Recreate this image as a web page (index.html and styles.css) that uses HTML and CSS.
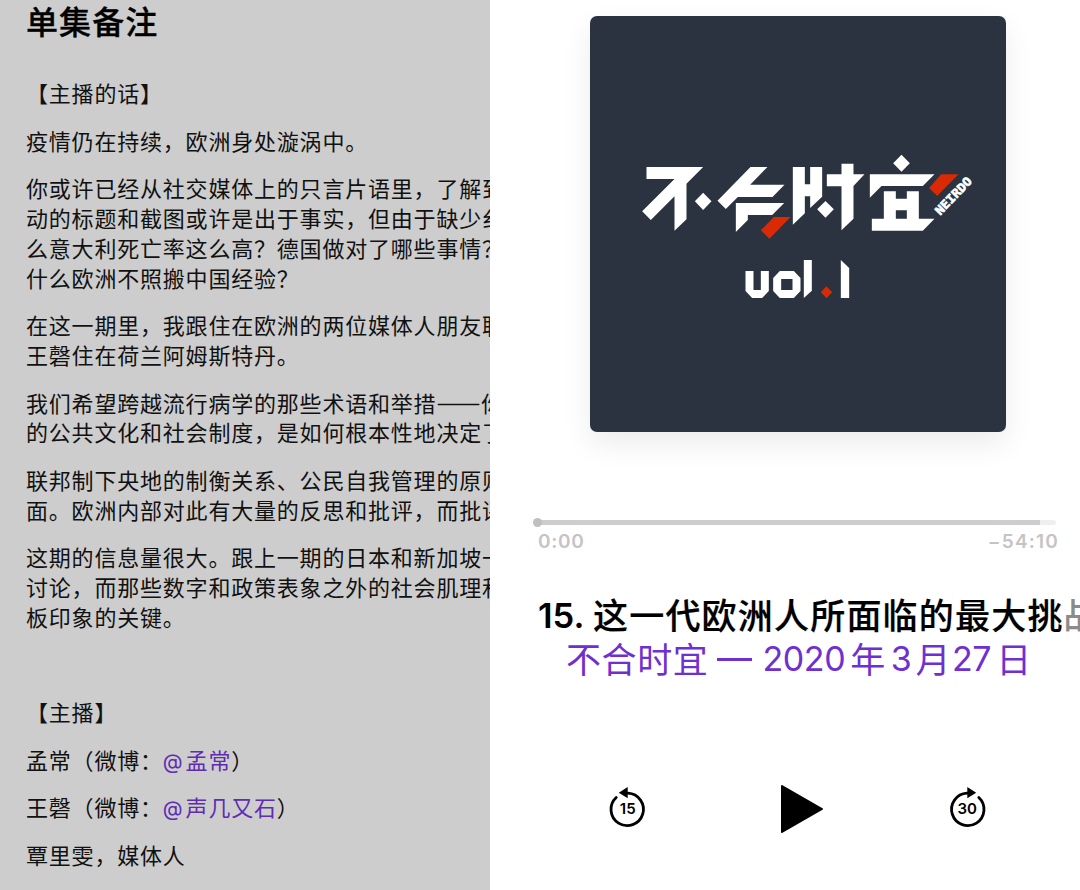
FILE: index.html
```html
<!DOCTYPE html>
<html lang="zh-CN">
<head>
<meta charset="utf-8">
<title>不合时宜</title>
<link rel="stylesheet" href="styles.css">
</head>
<body>
<main class="app">
  <section class="notes">
    <h1 class="notes-title">单集备注</h1>
    <p>【主播的话】</p>
    <p>疫情仍在持续，欧洲身处漩涡中。</p>
    <p>你或许已经从社交媒体上的只言片语里，了解到<br>动的标题和截图或许是出于事实，但由于缺少纟<br>么意大利死亡率这么高？德国做对了哪些事情？<br>什么欧洲不照搬中国经验？</p>
    <p>在这一期里，我跟住在欧洲的两位媒体人朋友联<br>王磬住在荷兰阿姆斯特丹。</p>
    <p>我们希望跨越流行病学的那些术语和举措<span class="rule">——</span>你<br>的公共文化和社会制度，是如何根本性地决定了</p>
    <p>联邦制下央地的制衡关系、公民自我管理的原则<br>面。欧洲内部对此有大量的反思和批评，而批评</p>
    <p>这期的信息量很大。跟上一期的日本和新加坡一<br>讨论，而那些数字和政策表象之外的社会肌理和<br>板印象的关键。</p>
    <p>&nbsp;</p>
    <p>【主播】</p>
    <p>孟常（微博：<a class="mention"><span class="at">@</span>孟常</a>）</p>
    <p>王磬（微博：<a class="mention"><span class="at">@</span>声几又石</a>）</p>
    <p>覃里雯，媒体人</p>
  </section>

  <section class="player">
    <svg class="cover" viewBox="589.5 16 416.5 416">
      <g transform="translate(630 140) scale(.33333)" fill="#fff">
        <path d="M48 81H218L168 131V238L132 272V169L61 240L35 214L132 117H48Z"/>
        <path d="M218 158L243 184L218 210L193 184Z"/>
        <path d="M360 81H411L359 134H462L426 171H322L286 207L261 182Z"/>
        <path d="M316 189H461L425 225H352V240L316 276Z"/>
        <path fill="#d92a05" d="M430 231H480L417 296L391 271Z"/>
      </g>
      <g transform="translate(800 140) scale(.33333)" fill="#fff">
        <path d="M-23 81H13V133H29V81H65V170L29 204V169H13V220L-23 254Z"/>
        <path d="M75 183L100 208L75 233L50 208Z"/>
        <path d="M123 71H159V103H192L159 138V236L123 271V139H79V103H123Z"/>
        <path d="M303 44L328 70L303 95L278 70Z"/>
        <path d="M208 103H402L367 138H243L208 173Z"/>
        <path fill-rule="evenodd" d="M250 154H286V176H319V154H355V236H402L367 272H214V236H250ZM286 211V236H319V211Z"/>
        <path fill="#d92a05" d="M422 103H474L410 168L386 144Z"/>
        <text class="cover-tag" transform="translate(419 227) rotate(-46)" textLength="141" lengthAdjust="spacingAndGlyphs">NEIRDO</text>
      </g>
      <g transform="translate(730 250) scale(.33333)" fill="#fff">
        <path d="M45 63H69V120H91V63H115V123L95 144H65L45 123Z"/>
        <path fill-rule="evenodd" d="M148 63H190L210 84V123L190 144H148L128 123V84ZM152 87V120H186V87Z"/>
        <path d="M220 30H244V122L220 144Z"/>
        <path d="M331 30L356 54V144H331Z"/>
        <path fill="#d92a05" d="M288 109L305 127L288 145L271 127Z"/>
      </g>
    </svg>

    <div class="scrubber">
      <div class="track"><div class="buffered"></div><div class="knob"></div></div>
      <div class="times"><span>0:00</span><span class="left">−54:10</span></div>
    </div>

    <h2 class="episode"><span class="num">15.</span><span class="name">这一代欧洲人所面临的最大挑<span class="faded">战</span></span></h2>
    <div class="show"><span class="cjk">不合时宜</span><span class="dash"></span><span class="lat">2020</span><span class="cjk">年</span><span class="lat month">3</span><span class="cjk">月</span><span class="lat">27</span><span class="cjk">日</span></div>

    <div class="controls">
      <svg class="skip" viewBox="0 0 40 44">
        <path d="M8.2 11.5A16.2 16.2 0 1 0 20 7.2H17" fill="none" stroke="#000" stroke-width="2.8" stroke-linecap="round"/>
        <path d="M10.8 6.7L19.7 1V12.3Z"/>
        <text x="19.7" y="28.4" text-anchor="middle">15</text>
      </svg>
      <svg class="play" viewBox="0 0 44 50"><path d="M2 2L42 25L2 48Z" stroke="#000" stroke-width="2" stroke-linejoin="round"/></svg>
      <svg class="skip" viewBox="0 0 40 44">
        <path d="M31.8 11.5A16.2 16.2 0 1 1 20 7.2H23" fill="none" stroke="#000" stroke-width="2.8" stroke-linecap="round"/>
        <path d="M29.2 6.7L20.3 1V12.3Z"/>
        <text x="20.2" y="28.4" text-anchor="middle">30</text>
      </svg>
    </div>
  </section>
</main>
</body>
</html>
```
FILE: styles.css
```css
body {
  margin: 0;
  background: #fff;
  color: #000;
  font-family: "Noto Sans CJK SC", "Liberation Sans", sans-serif;
}
.app {
  display: flex;
  width: 1080px;
  height: 890px;
  overflow: hidden;
}
.notes {
  box-sizing: border-box;
  width: 490px;
  height: 890px;
  padding-left: 26px;
  flex: none;
  overflow: hidden;
  white-space: nowrap;
  background: #cdcdcd;
  color: #111;
  font-size: 22px;
  letter-spacing: 0.8px;
  line-height: 29.8px;
}
.notes p { margin: 0 0 17.8px; }
.notes-title {
  margin: 0 0 37px;
  color: #000;
  font-size: 32px;
  font-weight: 500;
  letter-spacing: 1.1px;
  line-height: 41px;
  -webkit-text-stroke: 0.3px #000;
}
.rule { -webkit-text-stroke: 0.6px #111; }
.mention { color: #5f2cb2; }
.at {
  display: inline-block;
  width: 22.8px;
  font-family: Inter, sans-serif;
  font-size: 20.5px;
  line-height: 20px;
}
.player {
  display: flex;
  flex-direction: column;
  width: 590px;
  overflow: hidden;
}
.cover {
  width: 416.5px;
  height: 416px;
  margin: 16px 0 0 99.5px;
  flex: none;
  border-radius: 7px;
  background: #2a333f;
  box-shadow: 0 12px 30px rgba(0, 0, 0, 0.08);
}
.cover-tag {
  font: 700 36px "DejaVu Sans Mono", monospace;
  stroke: #fff;
  stroke-width: 2px;
}
.scrubber {
  width: 519px;
  margin: 88px 0 0 47px;
}
.track {
  position: relative;
  height: 5px;
  border-radius: 3px;
  background: #efeff1;
}
.buffered {
  width: 503px;
  height: 5px;
  background: #cdcdcf;
}
.knob {
  position: absolute;
  left: -4px;
  top: -2px;
  width: 9px;
  height: 9px;
  border-radius: 50%;
  background: #bfbfc1;
}
.times {
  display: flex;
  justify-content: space-between;
  padding: 5px 0 0 1px;
  color: #c4c4c6;
  font: 600 19px/24px Inter, sans-serif;
  letter-spacing: 0.7px;
}
.left {
  margin-right: -3px;
  letter-spacing: 1.2px;
}
.episode {
  display: flex;
  margin: 38px 0 0 48px;
  font-size: 35px;
  font-weight: 500;
  line-height: 44px;
  white-space: nowrap;
}
.num {
  flex: none;
  width: 55px;
  padding-top: 2px;
  font-family: Inter, sans-serif;
  font-weight: 600;
  font-size: 34.5px;
}
.name {
  letter-spacing: 1.2px;
  -webkit-text-stroke: 0.2px currentColor;
}
.faded { color: #8b8b8b; }
.show {
  display: flex;
  align-items: center;
  height: 40px;
  margin: 0 0 3px 76px;
  color: #702fd0;
  font-size: 35px;
  line-height: 40px;
}
.cjk { letter-spacing: 0.6px; }
.dash {
  width: 35px;
  height: 2.6px;
  margin: 3px 9px 0 9px;
  background: currentColor;
}
.lat {
  margin: 2px 5px 0 1px;
  font-family: Inter, sans-serif;
  font-size: 34px;
  letter-spacing: -0.4px;
}
.month { margin: 2px 4px 0 5px; }
.controls {
  display: flex;
  align-items: center;
  justify-content: space-between;
  width: 379px;
  margin: 103px 0 0 118px;
}
.skip {
  width: 40px;
  height: 44px;
  margin-bottom: 2px;
}
.skip text { font: 600 15px Inter, sans-serif; }
.play {
  width: 44px;
  height: 50px;
  margin-left: 8px;
}
```
